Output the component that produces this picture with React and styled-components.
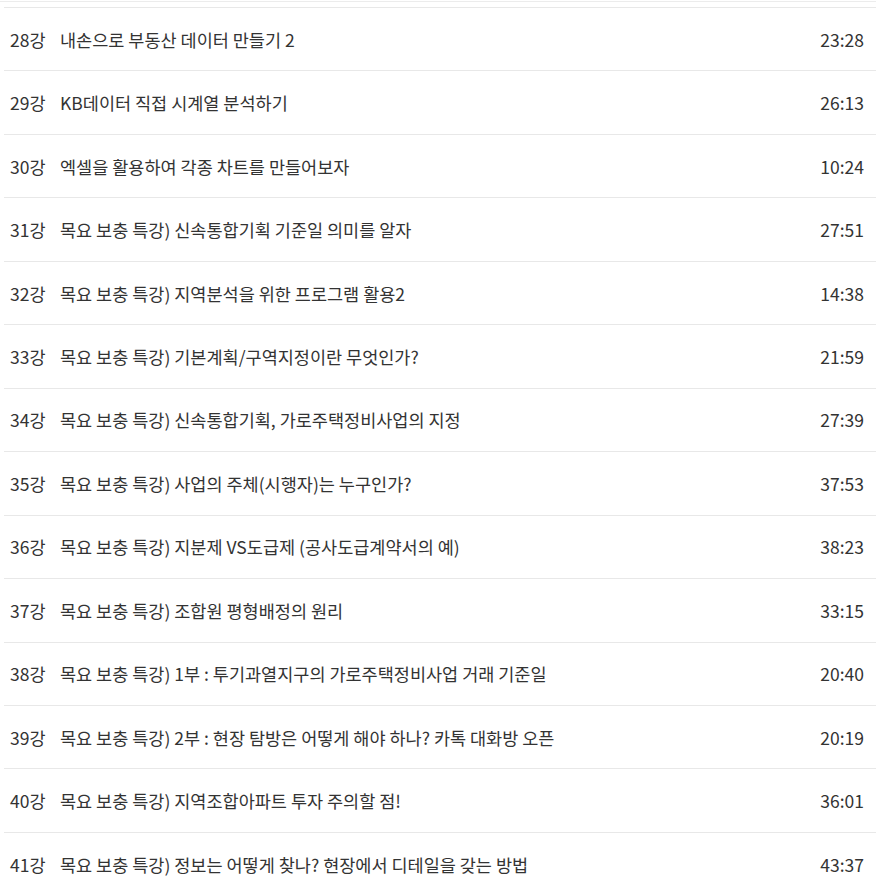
import React from 'react'
import styled, { createGlobalStyle } from 'styled-components'

const lectures = [
    ['28강', '내손으로 부동산 데이터 만들기 2', '23:28'],
    ['29강', 'KB데이터 직접 시계열 분석하기', '26:13'],
    ['30강', '엑셀을 활용하여 각종 차트를 만들어보자', '10:24'],
    ['31강', '목요 보충 특강) 신속통합기획 기준일 의미를 알자', '27:51'],
    ['32강', '목요 보충 특강) 지역분석을 위한 프로그램 활용2', '14:38'],
    ['33강', '목요 보충 특강) 기본계획/구역지정이란 무엇인가?', '21:59'],
    ['34강', '목요 보충 특강) 신속통합기획, 가로주택정비사업의 지정', '27:39'],
    ['35강', '목요 보충 특강) 사업의 주체(시행자)는 누구인가?', '37:53'],
    ['36강', '목요 보충 특강) 지분제 VS도급제 (공사도급계약서의 예)', '38:23'],
    ['37강', '목요 보충 특강) 조합원 평형배정의 원리', '33:15'],
    ['38강', '목요 보충 특강) 1부 : 투기과열지구의 가로주택정비사업 거래 기준일', '20:40'],
    ['39강', '목요 보충 특강) 2부 : 현장 탐방은 어떻게 해야 하나? 카톡 대화방 오픈', '20:19'],
    ['40강', '목요 보충 특강) 지역조합아파트 투자 주의할 점!', '36:01'],
    ['41강', '목요 보충 특강) 정보는 어떻게 찾나? 현장에서 디테일을 갖는 방법', '43:37'],
]

function App() {
    return (
        <>
            <GlobalStyle />
            <Page>
                <TopRule />
                <LectureList>
                    {lectures.map(([no, title, time]) => (
                        <LectureRow key={no}>
                            <LectureNo>{no}</LectureNo>
                            <LectureTitle>{title}</LectureTitle>
                            <LectureTime>{time}</LectureTime>
                        </LectureRow>
                    ))}
                </LectureList>
            </Page>
        </>
    )
}

export default App

const GlobalStyle = createGlobalStyle`
    html, body {
        margin: 0;
        padding: 0;
        background: #fff;
    }
    body {
        font-family: "Noto Sans CJK KR", "Noto Sans", sans-serif;
        color: #333;
        overflow: hidden;
    }
`;

const Page = styled.div`
    width: 876px;
    height: 885px;
    overflow: hidden;
`;

const TopRule = styled.div`
    height: 1px;
    margin-top: 1px;
    background: #ececec;
`;

const LectureList = styled.ul`
    list-style: none;
    margin: 5px 0 0 4px;
    padding: 0;
`;

const LectureRow = styled.li`
    display: flex;
    align-items: center;
    box-sizing: border-box;
    height: 63.46px;
    padding: 0 12px 0 6px;
    border-top: 1px solid #e8e8e8;
    font-size: 17.5px;
`;

const LectureNo = styled.span`
    flex: 0 0 50px;
`;

const LectureTitle = styled.span`
    flex: 1;
    white-space: nowrap;
`;

const LectureTime = styled.span`
    flex: 0 0 auto;
`;
